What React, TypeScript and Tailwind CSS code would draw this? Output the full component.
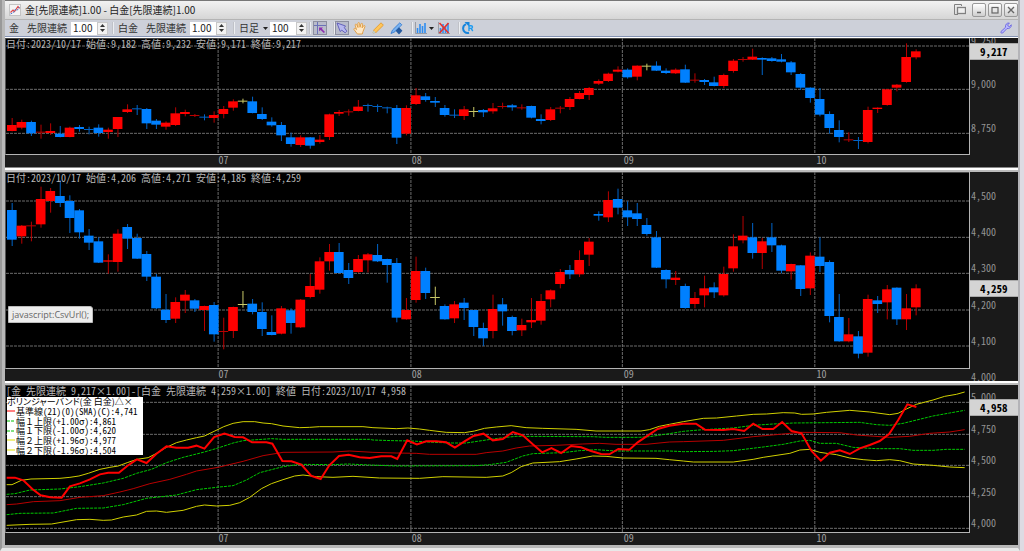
import { useState } from 'react';
import type { ReactNode } from 'react';

type Tone = 'r' | 'b' | 'y';
// tone, high, body top, body bottom, low
type Candle = [Tone, number, number, number, number];

interface AxisLabel {
  text: string;
  at: number;
}

interface PanelProps {
  title: string;
  top: number;
  height: number;
  labels: AxisLabel[];
  last: AxisLabel;
  children: ReactNode;
  overlay?: ReactNode;
}

const PLOT_LEFT = 18;
const PLOT_WIDTH = 2892;
const FIRST_CANDLE = 36;
const CANDLE_STEP = 28.88;

const MONTHS = [
  { text: '07', at: 655 },
  { text: '08', at: 1234 },
  { text: '09', at: 1869 },
  { text: '10', at: 2447 },
];

const BODY: Record<Tone, string> = { r: '#ff0000', b: '#0080ff', y: '#d8d870' };
const WICK: Record<Tone, string> = { r: '#b80000', b: '#0064c8', y: '#c8c868' };

const GOLD: Candle[] = [
  ['r', 246, 267, 285, 286], ['r', 251, 258, 275, 280], ['b', 254, 258, 292, 300], ['r', 266, 287, 290, 308],
  ['r', 262, 285, 291, 297], ['b', 270, 293, 303, 304], ['r', 272, 275, 303, 304], ['b', 267, 273, 279, 287],
  ['b', 272, 279, 282, 295], ['b', 265, 275, 291, 302], ['r', 275, 281, 288, 308], ['r', 243, 243, 279, 303],
  ['r', 205, 220, 228, 231], ['b', 207, 217, 220, 237], ['b', 216, 219, 262, 279], ['b', 249, 254, 266, 279],
  ['r', 256, 260, 272, 281], ['r', 214, 232, 267, 270], ['r', 221, 228, 234, 241], ['r', 234, 237, 239, 243],
  ['b', 235, 242, 245, 253], ['r', 226, 237, 246, 260], ['r', 210, 219, 234, 247], ['r', 190, 196, 215, 224],
  ['y', 188, 194, 197, 202], ['b', 182, 196, 231, 232], ['b', 214, 234, 249, 252], ['b', 244, 257, 268, 272],
  ['b', 258, 267, 298, 315], ['b', 290, 304, 324, 332], ['r', 298, 304, 327, 333], ['b', 303, 304, 329, 338],
  ['r', 297, 311, 318, 323], ['r', 233, 235, 303, 312], ['r', 222, 228, 233, 240], ['r', 220, 226, 229, 239],
  ['r', 192, 212, 225, 226], ['b', 203, 207, 210, 227], ['b', 205, 210, 213, 228], ['b', 212, 214, 217, 232],
  ['b', 207, 216, 305, 324], ['r', 208, 216, 293, 298], ['r', 156, 178, 204, 207], ['b', 171, 181, 192, 197],
  ['b', 183, 195, 200, 213], ['b', 207, 216, 237, 242], ['b', 220, 236, 239, 246], ['r', 210, 220, 240, 252],
  ['y', 213, 225, 228, 243], ['b', 219, 222, 229, 243], ['r', 201, 217, 226, 233], ['r', 200, 210, 213, 218],
  ['b', 204, 208, 214, 224], ['r', 205, 214, 217, 221], ['b', 209, 210, 245, 247], ['b', 235, 249, 255, 265],
  ['r', 213, 220, 252, 255], ['r', 210, 215, 218, 232], ['r', 183, 189, 213, 222], ['r', 165, 171, 189, 190],
  ['r', 153, 156, 177, 192], ['r', 130, 135, 143, 147], ['r', 110, 113, 135, 138], ['r', 91, 101, 107, 109],
  ['b', 97, 101, 124, 128], ['r', 88, 89, 122, 133], ['y', 83, 89, 92, 103], ['b', 76, 89, 104, 105],
  ['b', 97, 104, 111, 114], ['r', 97, 101, 112, 114], ['b', 86, 100, 140, 141], ['r', 112, 131, 134, 140],
  ['b', 129, 132, 138, 147], ['b', 122, 139, 150, 151], ['r', 113, 117, 150, 156], ['r', 69, 74, 105, 110],
  ['r', 63, 69, 72, 77], ['r', 38, 62, 71, 72], ['b', 64, 66, 71, 117], ['b', 63, 67, 75, 77],
  ['b', 54, 70, 77, 79], ['b', 75, 79, 109, 117], ['b', 111, 114, 155, 162], ['b', 154, 155, 186, 200],
  ['b', 156, 189, 236, 241], ['b', 226, 234, 276, 293], ['b', 253, 282, 303, 319], ['r', 289, 310, 313, 318],
  ['b', 303, 312, 315, 339], ['r', 212, 222, 318, 322], ['r', 214, 215, 219, 231], ['r', 159, 160, 207, 209],
  ['r', 144, 146, 155, 166], ['r', 22, 63, 138, 140], ['r', 40, 46, 64, 70],
];

const PLATINUM: Candle[] = [
  ['b', 114, 135, 224, 243], ['r', 180, 182, 214, 236], ['r', 170, 181, 184, 229], ['r', 65, 102, 178, 188],
  ['r', 69, 78, 108, 143], ['b', 46, 93, 114, 126], ['b', 91, 108, 159, 204], ['b', 132, 136, 202, 221],
  ['b', 192, 212, 233, 255], ['b', 217, 229, 293, 294], ['r', 268, 286, 290, 326], ['r', 193, 206, 291, 320],
  ['b', 177, 186, 221, 252], ['b', 206, 219, 281, 282], ['b', 258, 267, 335, 348], ['b', 327, 335, 430, 432],
  ['b', 387, 434, 465, 474], ['r', 397, 411, 461, 474], ['r', 375, 389, 407, 444], ['b', 402, 406, 431, 441],
  ['r', 422, 423, 435, 498], ['b', 411, 420, 508, 530], ['r', 458, 498, 501, 553], ['r', 425, 426, 498, 519],
  ['y', 378, 417, 420, 428], ['b', 402, 416, 441, 448], ['b', 412, 441, 492, 513], ['b', 451, 501, 510, 511],
  ['r', 423, 430, 506, 508], ['b', 430, 436, 474, 506], ['r', 402, 404, 487, 489], ['r', 327, 363, 396, 400],
  ['r', 277, 289, 374, 386], ['r', 237, 261, 289, 317], ['b', 234, 261, 324, 325], ['b', 294, 315, 339, 357],
  ['r', 270, 282, 321, 324], ['r', 264, 268, 286, 322], ['b', 237, 270, 289, 291], ['b', 281, 282, 300, 353],
  ['b', 279, 294, 458, 472], ['r', 399, 435, 463, 464], ['r', 275, 318, 405, 413], ['b', 308, 318, 384, 402],
  ['y', 365, 396, 399, 420], ['b', 418, 423, 463, 464], ['r', 408, 418, 460, 474], ['b', 399, 413, 429, 465],
  ['b', 435, 435, 486, 513], ['b', 473, 489, 520, 543], ['r', 389, 432, 498, 520], ['b', 399, 418, 439, 482],
  ['b', 452, 456, 498, 511], ['r', 461, 480, 496, 513], ['r', 399, 465, 472, 489], ['r', 387, 408, 467, 479],
  ['r', 373, 376, 403, 427], ['r', 312, 321, 357, 370], ['b', 300, 315, 328, 342], ['r', 256, 285, 328, 336],
  ['r', 219, 230, 269, 303], ['b', 139, 147, 152, 167], ['r', 79, 105, 157, 171], ['b', 71, 102, 128, 148],
  ['b', 109, 136, 157, 183], ['b', 114, 145, 162, 183], ['b', 159, 180, 207, 212], ['b', 198, 217, 308, 309],
  ['b', 313, 315, 343, 370], ['r', 318, 338, 345, 360], ['b', 356, 363, 429, 431], ['r', 381, 399, 417, 430],
  ['r', 332, 370, 391, 427], ['b', 352, 367, 382, 399], ['r', 305, 327, 391, 395], ['r', 208, 244, 310, 320],
  ['r', 153, 212, 226, 235], ['b', 174, 217, 264, 281], ['r', 219, 229, 264, 312], ['b', 174, 217, 241, 261],
  ['b', 239, 241, 317, 325], ['r', 296, 297, 319, 344], ['b', 300, 301, 372, 393], ['r', 262, 272, 370, 390],
  ['b', 217, 275, 303, 321], ['b', 286, 291, 453, 472], ['b', 387, 456, 529, 530], ['r', 459, 508, 529, 532],
  ['b', 498, 514, 566, 580], ['r', 389, 402, 563, 575], ['b', 393, 406, 417, 444], ['r', 360, 373, 412, 463],
  ['b', 367, 368, 463, 480], ['r', 387, 430, 463, 495], ['r', 358, 370, 427, 451],
];

const BANDS = [
  {
    color: '#b80000',
    dash: undefined,
    points:
      '20,374 50,372 100,365 180,362 240,352 310,347 360,336 400,326 450,311 510,298 560,283 590,273 655,262 730,244 790,227 850,217 1000,216 1050,213 1120,217 1190,219 1250,220 1290,223 1430,223 1460,218 1510,213 1550,204 1590,198 1670,196 1750,192 1800,190 1850,193 1940,193 2010,186 2052,185 2172,181 2262,170 2342,163 2402,157 2522,158 2572,165 2672,172 2732,169 2792,160 2852,156 2897,149',
  },
  {
    color: '#00c800',
    dash: '3 1',
    points:
      '20,343 45,341 90,330 180,327 240,320 310,309 370,295 410,280 455,268 500,248 550,232 610,217 655,204 700,189 730,182 815,176 850,178 1110,178 1120,180 1180,182 1240,183 1300,187 1360,189 1400,189 1460,180 1510,173 1550,169 1780,170 1820,172 1920,172 1950,170 2010,161 2052,154 2112,149 2202,144 2262,136 2322,132 2382,129 2582,127 2632,134 2672,136 2712,130 2802,108 2852,99 2897,91',
  },
  {
    color: '#00c800',
    dash: '3 1',
    points:
      '20,404 60,400 160,399 230,385 310,384 370,374 440,355 530,345 590,329 650,322 700,317 740,300 780,278 850,260 900,253 1000,254 1045,252 1110,255 1190,258 1430,257 1470,254 1520,247 1570,228 1600,221 1690,218 1740,212 1790,209 1850,213 2010,213 2052,215 2152,214 2202,212 2292,201 2352,193 2402,183 2432,181 2462,190 2512,190 2562,202 2632,206 2702,206 2742,211 2802,211 2842,208 2897,208',
  },
  {
    color: '#d0d000',
    dash: undefined,
    points:
      '20,314 36,314 64,301 93,297 180,295 210,292 237,288 265,280 300,268 330,262 355,258 382,248 411,238 445,233 470,220 500,202 530,188 560,180 590,173 614,168 643,154 672,140 700,130 730,125 765,125 790,129 815,131 850,138 900,143 930,142 960,140 1090,140 1120,143 1190,146 1225,144 1260,147 1290,151 1340,157 1395,158 1425,153 1455,145 1490,141 1535,137 1580,143 1630,145 1730,148 1790,153 1925,153 1950,149 1980,139 2010,133 2052,125 2112,115 2152,114 2212,108 2262,103 2302,102 2352,98 2387,99 2407,103 2442,102 2482,97 2552,91 2612,96 2672,104 2697,100 2722,87 2752,73 2802,60 2837,49 2872,43 2897,36',
  },
  {
    color: '#d0d000',
    dash: undefined,
    points:
      '20,436 90,433 155,432 230,419 270,418 310,421 335,420 370,411 410,405 440,394 470,393 500,397 550,391 590,379 614,375 650,378 690,376 720,368 750,352 785,326 815,311 850,299 885,288 910,285 950,290 1000,292 1060,289 1140,294 1260,295 1330,290 1460,292 1510,288 1535,278 1565,260 1600,249 1680,245 1730,237 1780,228 1820,229 1870,234 1970,235 2010,239 2052,243 2082,246 2202,246 2262,238 2292,232 2372,220 2402,210 2432,208 2462,217 2512,224 2552,234 2592,239 2632,242 2672,239 2702,242 2742,252 2802,256 2852,261 2897,263',
  },
];

const SPREAD =
  '20,293 45,293 70,301 97,327 122,346 151,352 185,353 210,319 240,310 270,298 300,283 325,278 357,278 382,258 411,238 440,249 470,221 500,199 530,203 565,203 590,197 614,206 643,171 674,161 705,171 730,172 757,187 800,187 818,191 848,243 875,244 905,254 935,288 963,297 989,256 1018,228 1047,224 1080,232 1110,234 1145,229 1175,229 1193,237 1223,181 1252,193 1280,184 1310,184 1340,187 1366,203 1395,184 1422,168 1452,161 1480,181 1510,177 1540,156 1570,166 1600,193 1628,217 1656,204 1685,219 1715,198 1745,202 1775,213 1805,222 1830,223 1857,207 1890,209 1915,187 1945,167 1975,147 2010,137 2052,131 2090,131 2117,149 2172,150 2202,147 2235,153 2262,131 2290,147 2322,147 2349,126 2377,153 2407,160 2437,213 2465,242 2492,218 2522,211 2552,222 2582,205 2612,195 2642,183 2670,162 2697,121 2725,73 2752,81';

const LEGEND = [
  { color: '#ff0000', dash: undefined, name: '基準線', value: '(21)(0)(SMA)(C):4,741' },
  { color: '#00c000', dash: '3 1', name: '幅１上限', value: '(+1.00σ):4,861' },
  { color: '#00c000', dash: '3 1', name: '幅１下限', value: '(-1.00σ):4,620' },
  { color: '#e0e000', dash: undefined, name: '幅２上限', value: '(+1.96σ):4,977' },
  { color: '#e0e000', dash: undefined, name: '幅２下限', value: '(-1.96σ):4,504' },
];

function Candles({ data }: { data: Candle[] }) {
  return (
    <>
      {data.map(([tone, high, top, bottom, low], i) => {
        const x = FIRST_CANDLE + i * CANDLE_STEP;
        return (
          <g key={i}>
            <rect x={x - 1} y={high} width={3} height={low - high} fill={WICK[tone]} />
            <rect
              x={x - 15}
              y={top}
              width={29}
              height={Math.max(bottom - top, 3)}
              fill={bottom - top < 4 ? WICK[tone] : BODY[tone]}
            />
          </g>
        );
      })}
    </>
  );
}

function Panel({ title, top, height, labels, last, children, overlay }: PanelProps) {
  // Axis positions are measured against the plot, which ends 13px above the panel
  const topOf = (at: number) => `calc((100% - 13px) * ${(at - top) / height})`;

  return (
    <section className="flex min-h-0 overflow-hidden bg-[#1a1a1a]">
      <div className="flex min-w-0 flex-1 flex-col">
        <div className="relative min-h-0 flex-1 border-r border-b border-l border-[#b4b4b4] border-l-[#555] bg-black">
          <svg
            className="absolute inset-0 size-full"
            viewBox={`${PLOT_LEFT} ${top} ${PLOT_WIDTH} ${height}`}
            preserveAspectRatio="none"
          >
            <path d={`M${PLOT_LEFT} ${top + 1}h${PLOT_WIDTH}`} stroke="#555" strokeWidth={3} />
            <g stroke="#6c6c6c" strokeDasharray="3 1" fill="none">
              {labels.map((l) => (
                <path key={l.text} d={`M${PLOT_LEFT} ${l.at}h${PLOT_WIDTH}`} vectorEffect="non-scaling-stroke" />
              ))}
              {MONTHS.map((m) => (
                <path key={m.text} d={`M${m.at} ${top}v${height}`} vectorEffect="non-scaling-stroke" />
              ))}
            </g>
            {children}
          </svg>
          <h2 className="relative text-[10px] leading-[12px] whitespace-nowrap text-[#b8b8b8]">{title}</h2>
          {overlay}
        </div>
        <div className="relative h-3 text-[10px] leading-[9px] text-[#a0a0a0]">
          {MONTHS.map((m) => (
            <span
              key={m.text}
              className="absolute top-0 pl-px"
              style={{ left: `${((m.at - PLOT_LEFT) / PLOT_WIDTH) * 100}%` }}
            >
              {m.text}
            </span>
          ))}
        </div>
      </div>
      <div className="relative w-12 shrink-0 overflow-hidden text-[10px] leading-[10px] text-[#949494]">
        {labels.map((l) => (
          <span key={l.text} className="absolute left-px -translate-y-full" style={{ top: topOf(l.at) }}>
            {l.text}
          </span>
        ))}
        <output
          className="absolute inset-x-0 h-[17px] border-y border-[#aaa] bg-[#d4d4d4] pl-[10px] text-[11px] leading-[15px] font-bold text-black"
          style={{ top: topOf(last.at) }}
        >
          {last.text}
        </output>
      </div>
    </section>
  );
}

function Stepper({ label, initial }: { label: string; initial: string }) {
  const [value, setValue] = useState(initial);
  const digits = initial.includes('.') ? 2 : 0;
  const step = (by: number) => setValue((Number(value) + by).toFixed(digits));

  return (
    <div className="flex h-[13px] w-[37px] bg-white">
      <input
        aria-label={label}
        value={value}
        onChange={(e) => setValue(e.target.value)}
        className="w-[26px] bg-white pl-0.5 text-[10px] leading-[12px] text-[#222] outline-none"
      />
      <div className="flex flex-1 flex-col border border-[#c8c8c8] bg-[#f2f2f2]">
        <button type="button" aria-label={`${label} up`} onClick={() => step(1)} className="flex flex-1 items-center justify-center">
          <svg width="5" height="3" viewBox="0 0 5 3">
            <path d="M0 3L2.5 0L5 3z" fill="#333" />
          </svg>
        </button>
        <button type="button" aria-label={`${label} down`} onClick={() => step(-1)} className="flex flex-1 items-center justify-center">
          <svg width="5" height="3" viewBox="0 0 5 3">
            <path d="M0 0L2.5 3L5 0z" fill="#333" />
          </svg>
        </button>
      </div>
    </div>
  );
}

function Divider() {
  return <div className="h-3 w-0.5 border-l border-[#c0c2c8] bg-[#eceef2]" />;
}

function Caret() {
  return (
    <svg width="5" height="3" viewBox="0 0 5 3">
      <path d="M0 0L2.5 3L5 0z" fill="#222" />
    </svg>
  );
}

function Bars() {
  return (
    <>
      <path d="M.5 0V11.500H12" fill="none" stroke="#9a9ca4" />
      <path d="M2.500 11V6M5 11V2M7.500 11V4M10 11V1" stroke="#2f8df0" strokeWidth="1.600" />
    </>
  );
}

function Toolbar() {
  return (
    <div className="flex h-[17px] items-center border-b border-[#8593b3] bg-[#cdd0d9] pr-1.5 pl-1 text-[10px] leading-[12px] whitespace-nowrap text-[#333]">
      <span>金</span>
      <span className="mr-1 ml-2">先限連続</span>
      <Stepper label="金 倍率" initial="1.00" />
      <div className="ml-1">
        <Divider />
      </div>
      <span className="ml-1">白金</span>
      <span className="mr-1 ml-2">先限連続</span>
      <Stepper label="白金 倍率" initial="1.00" />
      <div className="mr-1 ml-1.5">
        <Divider />
      </div>
      <label className="flex items-center gap-1">
        <select aria-label="足種" className="w-5 appearance-none bg-transparent outline-none">
          <option>日足</option>
        </select>
        <Caret />
      </label>
      <div className="mr-0.5 ml-0.5">
        <Stepper label="表示本数" initial="100" />
      </div>
      <Divider />
      <button type="button" aria-label="十字線" className="ml-0.5 flex size-[14px] items-center justify-center border border-[#8d8fa0] bg-[#b9bccb]">
        <svg width="12" height="12" viewBox="0 0 12 12" fill="none">
          <path d="M3.500 0V12M0 3.500H12" stroke="#6a72b8" />
          <path d="M5 5.500h4L7.800 6.800L11 10L9.800 11L6.600 7.900L5.200 9.300z" fill="#8e2fb0" />
        </svg>
      </button>
      <div className="ml-1.5">
        <Divider />
      </div>
      <button type="button" aria-label="選択" className="flex size-[14px] items-center justify-center border border-[#8d8fa0] bg-[#b9bccb]">
        <svg width="12" height="12" viewBox="0 0 12 12">
          <path d="M1 1L9.500 4L8.300 5.600L10.800 9.200L9.200 10.800L5.800 8.200L4.200 9.500z" fill="#b7b8f0" stroke="#5a58b8" strokeWidth=".9" />
        </svg>
      </button>
      <button type="button" aria-label="移動" className="ml-1">
        <svg width="13" height="13" viewBox="0 0 13 13">
          <path
            d="M4 11.500L1 7.500C.5 6.500 1.800 6 2.500 6.700L3.500 7.600L2.200 3.200C2 2 3.400 1.700 3.800 2.800L5 5.500L4.900 1.500C4.900.3 6.500.3 6.600 1.500L7 5.300L8 1.900C8.400.9 9.700 1.300 9.600 2.300L9.100 5.900L10.500 3.800C11.200 3 12.300 3.700 11.900 4.700L10 9.500L9.300 12H4.400z"
            fill="#ffe9c8"
            stroke="#e09a3c"
            strokeWidth=".9"
          />
        </svg>
      </button>
      <button type="button" aria-label="鉛筆" className="ml-1.5">
        <svg width="12" height="12" viewBox="0 0 12 12">
          <path d="M1 11L2 7.800L9 .8L11.400 3.200L4.300 10.200z" fill="#ffc55a" stroke="#e0952a" strokeWidth=".8" />
          <path d="M.5 11.500L1.600 8.600L3.600 10.500z" fill="#b8d0d8" />
        </svg>
      </button>
      <button type="button" aria-label="描画ツール" className="ml-1.5">
        <svg width="13" height="13" viewBox="0 0 13 13">
          <path d="M1 11.500L2.500 8L9.800.8L11.800 2.800L5 9.700z" fill="#7ab2f2" stroke="#3b7fd0" strokeWidth=".9" />
          <path d="M9 5.200L12.400 8.800L9 12.400L5.600 8.800z" fill="#24599f" />
        </svg>
      </button>
      <div className="mr-0.5 ml-2">
        <Divider />
      </div>
      <button type="button" aria-label="指標" className="flex items-center gap-0.5">
        <svg width="12" height="12" viewBox="0 0 12 12">
          <Bars />
        </svg>
        <Caret />
      </button>
      <button type="button" aria-label="指標削除" className="ml-1">
        <svg width="12" height="12" viewBox="0 0 12 12">
          <Bars />
          <path d="M1.500 1L10.500 11M10.500 1L1.500 11" stroke="#e8322c" strokeWidth="1.600" />
        </svg>
      </button>
      <div className="mr-0.5 ml-2">
        <Divider />
      </div>
      <button type="button" aria-label="更新">
        <svg width="12" height="12" viewBox="0 0 12 12" fill="none">
          <path d="M7 10.800C3.500 11.600 1.100 9.300 1.100 6.500C1.100 4.500 2.200 3 4 2.200" stroke="#1684dc" strokeWidth="2" />
          <path d="M2.500 0H7.500V5z" fill="#1684dc" />
          <path d="M7 9V3.800H9C11 3.800 11 6.400 9 6.400H7M9 6.400L10.800 9" stroke="#1f9bf0" strokeWidth="1.400" />
        </svg>
      </button>
      <button type="button" aria-label="設定" className="ml-auto">
        <svg width="12" height="12" viewBox="0 0 12 12">
          <path
            d="M1 9.500L5.500 5.300C5 2.800 6.800.6 9.400 1L7.700 2.900L8.200 4.200L9.500 4.500L11.300 2.800C11.600 5.300 9.300 7 7 6.500L2.700 11C1.500 11.600.4 10.600 1 9.500z"
            fill="#b9b8ff"
            stroke="#6a64e0"
            strokeWidth=".9"
          />
        </svg>
      </button>
    </div>
  );
}

function WindowButton({ label, children }: { label: string; children: ReactNode }) {
  return (
    <button
      type="button"
      aria-label={label}
      className="flex size-[14px] items-center justify-center rounded-[2px] border border-[#999] bg-linear-to-b from-white to-[#cfcfcf]"
    >
      <svg width="10" height="10" viewBox="0 0 10 10" fill="none" stroke="#666">
        {children}
      </svg>
    </button>
  );
}

function TitleBar() {
  return (
    <header className="flex h-5 items-center border-t border-b border-t-[#777] border-b-[#b4b4b4] bg-linear-to-b from-[#f2f2f2] to-[#d6d6d6] pl-1">
      <svg width="12" height="12" viewBox="0 0 12 12" fill="none">
        <rect x=".5" y=".5" width="11" height="11" fill="#f4f4f4" stroke="#c4c4c4" />
        <path d="M1.500 8.500L4 6L5.500 7.500L9 2.500L10.500 4.500" stroke="#e04848" strokeWidth="1.200" />
        <path d="M1.500 10L4.500 8.500L6 5.500L8 6.500L10.500 3" stroke="#4a78d0" strokeDasharray="2 1" />
      </svg>
      <h1 className="ml-1 text-[10px] leading-[14px] text-[#222]">金[先限連続]1.00 - 白金[先限連続]1.00</h1>
      <div className="ml-auto flex items-center gap-0.5">
        <button type="button" aria-label="別ウィンドウ" className="mr-1">
          <svg width="12" height="12" viewBox="0 0 12 12" fill="none" stroke="#808080">
            <path d="M7.500 2V.5H.5V10.500H4" />
            <rect x="3.500" y="3.500" width="8" height="6" fill="#eee" strokeWidth="1.300" />
          </svg>
        </button>
        <WindowButton label="最小化">
          <path d="M3 7.500H7" strokeWidth="1.500" />
        </WindowButton>
        <WindowButton label="最大化">
          <rect x="2" y="2.500" width="6" height="5.500" strokeWidth="1.200" />
        </WindowButton>
        <WindowButton label="閉じる">
          <path d="M2 2L8 8M8 2L2 8" strokeWidth="1.400" />
        </WindowButton>
      </div>
    </header>
  );
}

function BandLegend() {
  return (
    <div className="absolute top-3 left-px flex h-[58px] w-[136px] flex-col justify-around bg-white text-[9px] leading-[9px] whitespace-nowrap text-black">
      <div className="flex [font-feature-settings:'palt']">
        <span>ボリンジャーバンド(金 白金)</span>
        <button type="button" aria-label="折りたたむ">△</button>
        <button type="button" aria-label="閉じる">×</button>
      </div>
      {LEGEND.map((row) => (
        <div key={row.name} className="flex items-center">
          <svg width="8" height="2" viewBox="0 0 8 2" className="mr-px">
            <path d="M0 1H8" stroke={row.color} strokeDasharray={row.dash} />
          </svg>
          <span className="[font-feature-settings:normal]">{row.name}</span>
          <span>{row.value}</span>
        </div>
      ))}
    </div>
  );
}

export default function App() {
  return (
    <div className="h-screen bg-[#dddbe3] pr-1 font-['Liberation_Sans_Narrow','Noto_Sans_CJK_JP',sans-serif]">
      <div className="flex h-full flex-col border-r-2 border-b-[3px] border-l-2 border-r-[#b4b4b8] border-b-[#e8e8e8] border-l-[#999]">
        <div className="flex min-h-0 flex-1 flex-col border-b-[3px] border-l-[3px] border-[#b8b8b8]">
          <TitleBar />
          <Toolbar />
          <div className="h-px bg-white" />
          <main className="grid min-h-0 flex-1 grid-rows-[129fr_5px_209fr_4px_160fr] font-['Noto_Sans_CJK_JP',sans-serif] [font-feature-settings:'hwid']">
            <Panel
              title="日付:2023/10/17 始値:9,182 高値:9,232 安値:9,171 終値:9,217"
              top={6}
              height={348}
              labels={[
                { text: '9,250', at: 30 },
                { text: '9,000', at: 160 },
                { text: '8,750', at: 292 },
              ]}
              last={{ text: '9,217', at: 22 }}
            >
              <Candles data={GOLD} />
            </Panel>
            <div className="border-t border-b-2 border-t-[#888] border-b-[#bbb] bg-white" />
            <Panel
              title="日付:2023/10/17 始値:4,206 高値:4,271 安値:4,185 終値:4,259"
              top={21}
              height={588}
              labels={[
                { text: '4,500', at: 108 },
                { text: '4,400', at: 217 },
                { text: '4,300', at: 325 },
                { text: '4,200', at: 435 },
                { text: '4,100', at: 543 },
                { text: '4,000', at: 652 },
              ]}
              last={{ text: '4,259', at: 344 }}
              overlay={
                <div
                  role="status"
                  className="absolute bottom-[45px] left-0.5 h-[17px] w-[85px] rounded-tr-[3px] border border-[#bbb] bg-[#ededed] pl-[3px] font-['Open_Sans',sans-serif] text-[9px] leading-[15px] text-[#666]"
                >
                  javascript:CsvUrl();
                </div>
              }
            >
              <Candles data={PLATINUM} />
            </Panel>
            <div className="border-b-2 border-[#bbb] bg-white" />
            <Panel
              title="[金 先限連続 9,217×1.00]－[白金 先限連続 4,259×1.00] 終値 日付:2023/10/17 4,958"
              top={15}
              height={441}
              labels={[
                { text: '5,000', at: 67 },
                { text: '4,750', at: 163 },
                { text: '4,500', at: 256 },
                { text: '4,250', at: 350 },
                { text: '4,000', at: 445 },
              ]}
              last={{ text: '4,958', at: 57 }}
              overlay={<BandLegend />}
            >
              {BANDS.map((band, i) => (
                <polyline
                  key={i}
                  points={band.points}
                  fill="none"
                  stroke={band.color}
                  strokeDasharray={band.dash}
                  vectorEffect="non-scaling-stroke"
                />
              ))}
              <polyline points={SPREAD} fill="none" stroke="#f00" strokeWidth={2} vectorEffect="non-scaling-stroke" />
            </Panel>
          </main>
        </div>
      </div>
    </div>
  );
}
